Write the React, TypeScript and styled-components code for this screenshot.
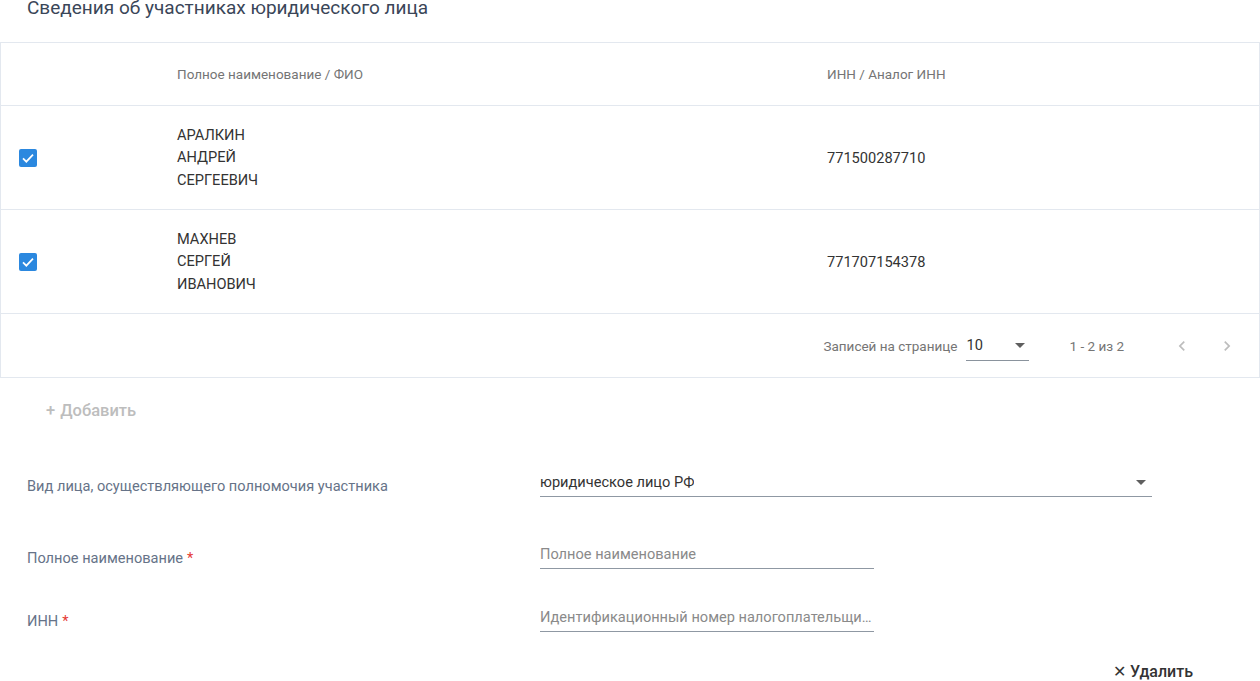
import React from "react";
import styled, { createGlobalStyle } from "styled-components";

const GlobalStyle = createGlobalStyle`
  html, body { margin: 0; padding: 0; background: #fff; }
  body { font-family: Roboto, "Noto Sans", "Liberation Sans", sans-serif; overflow: hidden; }
  * { box-sizing: border-box; }
`;

const Page = styled.div`
  width: 1260px;
  height: 681px;
  overflow: hidden;
`;

const Title = styled.h2`
  margin: -2px 0 24px 27px;
  height: 20px;
  font-size: 19px;
  line-height: 20px;
  font-weight: 400;
  color: #3a4658;
`;

const Table = styled.div`
  border: 1px solid #e3e8ef;
  width: 1260px;
`;

const Row = styled.div<{ $h: number }>`
  display: grid;
  grid-template-columns: 176px 650px 1fr;
  align-items: center;
  height: ${(p) => p.$h}px;
  border-bottom: 1px solid #e3e8ef;
`;

const HeadCell = styled.div`
  font-size: 13.5px;
  color: #757575;
`;

const CheckCell = styled.div`
  padding-left: 18px;
  display: flex;
  align-items: center;
`;

const Checkbox = styled.span`
  width: 18px;
  height: 18px;
  border-radius: 2px;
  background: #2b88df;
  display: inline-flex;
  align-items: center;
  justify-content: center;
`;

const NameCell = styled.div`
  font-size: 14.6px;
  line-height: 22.5px;
  color: #333;
`;

const InnCell = styled.div`
  font-size: 14.6px;
  color: #333;
`;

const Footer = styled.div`
  height: 63px;
  display: flex;
  align-items: center;
  justify-content: flex-end;
  padding-right: 22px;
  font-size: 13.5px;
  color: #757575;
`;

const PerPage = styled.div`
  display: flex;
  align-items: center;
  width: 63px;
  height: 30px;
  margin-left: 9px;
  margin-right: 40px;
  border-bottom: 1px solid #8a939d;
  justify-content: space-between;
  font-size: 14.6px;
  color: #333;
  padding-right: 4px;
`;

const Range = styled.span`
  margin-right: 48px;
`;

const PagerButton = styled.span<{ $gap?: number }>`
  display: inline-flex;
  width: 20px;
  justify-content: center;
  margin-left: ${(p) => p.$gap ?? 0}px;
`;

const AddButton = styled.div`
  margin: 16px 0 0 46px;
  height: 32px;
  display: flex;
  align-items: center;
  gap: 5px;
  font-size: 16.5px;
  font-weight: 500;
  color: #bdbdbd;
`;

const FormRow = styled.div<{ $mt: number }>`
  display: grid;
  grid-template-columns: 513px 1fr;
  align-items: end;
  padding-left: 27px;
  margin-top: ${(p) => p.$mt}px;
`;

const Label = styled.div`
  font-size: 14.6px;
  line-height: 20px;
  color: #667388;
  padding-bottom: 1px;
`;

const Star = styled.span`
  color: #e53935;
  margin-left: 4px;
`;

const Control = styled.div<{ $w: number; $placeholder?: boolean }>`
  width: ${(p) => p.$w}px;
  height: 31px;
  border-bottom: 1px solid #8f98a3;
  display: flex;
  align-items: center;
  justify-content: space-between;
  gap: 8px;
  padding-top: 2px;
  padding-right: ${(p) => (p.$placeholder ? 0 : 6)}px;
  font-size: 14.6px;
  color: ${(p) => (p.$placeholder ? "#8a8a8a" : "#333")};
`;

const ControlText = styled.span`
  white-space: nowrap;
  overflow: hidden;
  text-overflow: ellipsis;
  min-width: 0;
`;

const DeleteRow = styled.div`
  margin-top: 23px;
  display: flex;
  justify-content: flex-end;
  padding-right: 67px;
`;

const DeleteButton = styled.div`
  height: 32px;
  display: flex;
  align-items: center;
  gap: 4px;
  font-size: 16px;
  font-weight: 500;
  color: #333;
`;

const Caret = () => (
  <svg width="10" height="5" viewBox="0 0 10 5">
    <path d="M0 0h10L5 5z" fill="#5f5f5f" />
  </svg>
);

const Check = () => (
  <svg width="16" height="16" viewBox="0 0 24 24">
    <path d="M4.5 12.5l5 5L19.5 7" fill="none" stroke="#fff" strokeWidth="2.6" />
  </svg>
);

const ChevronLeft = () => (
  <svg width="32" height="32" viewBox="0 0 24 24">
    <path d="M15.41 7.41L14 6l-6 6 6 6 1.41-1.41L10.83 12z" fill="#bdbdbd" />
  </svg>
);

const ChevronRight = () => (
  <svg width="32" height="32" viewBox="0 0 24 24">
    <path d="M10 6L8.59 7.41 13.17 12l-4.58 4.59L10 18l6-6z" fill="#bdbdbd" />
  </svg>
);

const people = [
  { name: ["АРАЛКИН", "АНДРЕЙ", "СЕРГЕЕВИЧ"], inn: "771500287710" },
  { name: ["МАХНЕВ", "СЕРГЕЙ", "ИВАНОВИЧ"], inn: "771707154378" },
];

export default function App() {
  return (
    <Page>
      <GlobalStyle />
      <Title>Сведения об участниках юридического лица</Title>
      <Table>
        <Row $h={63}>
          <div />
          <HeadCell>Полное наименование / ФИО</HeadCell>
          <HeadCell>ИНН / Аналог ИНН</HeadCell>
        </Row>
        {people.map((p) => (
          <Row $h={104} key={p.inn}>
            <CheckCell>
              <Checkbox>
                <Check />
              </Checkbox>
            </CheckCell>
            <NameCell>
              {p.name.map((n) => (
                <div key={n}>{n}</div>
              ))}
            </NameCell>
            <InnCell>{p.inn}</InnCell>
          </Row>
        ))}
        <Footer>
          <span>Записей на странице</span>
          <PerPage>
            <span>10</span>
            <Caret />
          </PerPage>
          <Range>1 - 2 из 2</Range>
          <PagerButton>
            <ChevronLeft />
          </PagerButton>
          <PagerButton $gap={25}>
            <ChevronRight />
          </PagerButton>
        </Footer>
      </Table>
      <AddButton>
        <span>+</span>
        <span>Добавить</span>
      </AddButton>
      <FormRow $mt={40}>
        <Label>Вид лица, осуществляющего полномочия участника</Label>
        <Control $w={612}>
          <ControlText>юридическое лицо РФ</ControlText>
          <Caret />
        </Control>
      </FormRow>
      <FormRow $mt={41}>
        <Label>
          Полное наименование<Star>*</Star>
        </Label>
        <Control $w={334} $placeholder>
          <ControlText>Полное наименование</ControlText>
        </Control>
      </FormRow>
      <FormRow $mt={32}>
        <Label>
          ИНН<Star>*</Star>
        </Label>
        <Control $w={334} $placeholder>
          <ControlText>Идентификационный номер налогоплательщика</ControlText>
        </Control>
      </FormRow>
      <DeleteRow>
        <DeleteButton>
          <span>✕</span>
          <span>Удалить</span>
        </DeleteButton>
      </DeleteRow>
    </Page>
  );
}
